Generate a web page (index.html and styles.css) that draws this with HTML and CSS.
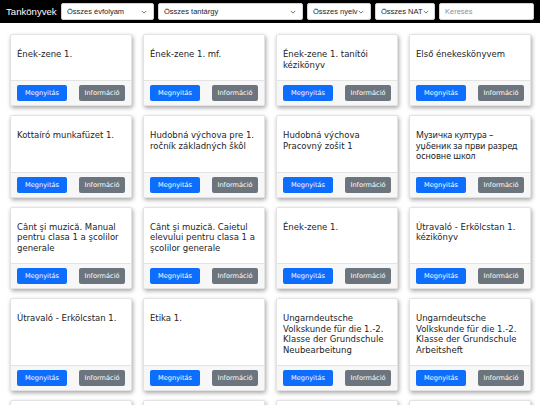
FILE: index.html
```html
<!DOCTYPE html>
<html lang="hu">
<head>
<meta charset="utf-8">
<title>Tankönyvek</title>
<link rel="stylesheet" href="styles.css">
</head>
<body>
<nav class="navbar">
  <span class="brand">Tankönyvek</span>
  <div class="filters">
    <div class="select w-evf"><span>Összes évfolyam</span><svg class="chev" viewBox="0 0 8 5"><path d="M1 1l3 3 3-3" fill="none" stroke="#444" stroke-width="1"/></svg></div>
    <div class="select w-tan"><span>Összes tantárgy</span><svg class="chev" viewBox="0 0 8 5"><path d="M1 1l3 3 3-3" fill="none" stroke="#444" stroke-width="1"/></svg></div>
    <div class="select w-nyelv"><span>Összes nyelv</span><svg class="chev" viewBox="0 0 8 5"><path d="M1 1l3 3 3-3" fill="none" stroke="#444" stroke-width="1"/></svg></div>
    <div class="select w-nat"><span>Összes NAT</span><svg class="chev" viewBox="0 0 8 5"><path d="M1 1l3 3 3-3" fill="none" stroke="#444" stroke-width="1"/></svg></div>
    <div class="search"><span>Keresés</span></div>
  </div>
</nav>
<main class="grid">
  <div class="card"><div class="card-body"><p class="title">Ének-zene 1.</p></div><div class="card-footer"><button class="btn btn-primary">Megnyitás</button><button class="btn btn-secondary">Információ</button></div></div>
  <div class="card"><div class="card-body"><p class="title">Ének-zene 1. mf.</p></div><div class="card-footer"><button class="btn btn-primary">Megnyitás</button><button class="btn btn-secondary">Információ</button></div></div>
  <div class="card"><div class="card-body"><p class="title">Ének-zene 1. tanítói kézikönyv</p></div><div class="card-footer"><button class="btn btn-primary">Megnyitás</button><button class="btn btn-secondary">Információ</button></div></div>
  <div class="card"><div class="card-body"><p class="title">Első énekeskönyvem</p></div><div class="card-footer"><button class="btn btn-primary">Megnyitás</button><button class="btn btn-secondary">Információ</button></div></div>

  <div class="card"><div class="card-body"><p class="title">Kottaíró munkafüzet 1.</p></div><div class="card-footer"><button class="btn btn-primary">Megnyitás</button><button class="btn btn-secondary">Információ</button></div></div>
  <div class="card"><div class="card-body"><p class="title">Hudobná výchova pre 1. ročník základných škôl</p></div><div class="card-footer"><button class="btn btn-primary">Megnyitás</button><button class="btn btn-secondary">Információ</button></div></div>
  <div class="card"><div class="card-body"><p class="title">Hudobná výchova Pracovný zošit 1</p></div><div class="card-footer"><button class="btn btn-primary">Megnyitás</button><button class="btn btn-secondary">Információ</button></div></div>
  <div class="card"><div class="card-body"><p class="title title-cyr" lang="sr">Музичка култура – уџбеник за први разред основне школ</p></div><div class="card-footer"><button class="btn btn-primary">Megnyitás</button><button class="btn btn-secondary">Információ</button></div></div>

  <div class="card"><div class="card-body"><p class="title">Cânt şi muzică. Manual pentru clasa 1 a şcolilor generale</p></div><div class="card-footer"><button class="btn btn-primary">Megnyitás</button><button class="btn btn-secondary">Információ</button></div></div>
  <div class="card"><div class="card-body"><p class="title">Cânt şi muzică. Caietul elevului pentru clasa 1 a şcolilor generale</p></div><div class="card-footer"><button class="btn btn-primary">Megnyitás</button><button class="btn btn-secondary">Információ</button></div></div>
  <div class="card"><div class="card-body"><p class="title">Ének-zene 1.</p></div><div class="card-footer"><button class="btn btn-primary">Megnyitás</button><button class="btn btn-secondary">Információ</button></div></div>
  <div class="card"><div class="card-body"><p class="title">Útravaló - Erkölcstan 1. kézikönyv</p></div><div class="card-footer"><button class="btn btn-primary">Megnyitás</button><button class="btn btn-secondary">Információ</button></div></div>

  <div class="card"><div class="card-body"><p class="title">Útravaló - Erkölcstan 1.</p></div><div class="card-footer"><button class="btn btn-primary">Megnyitás</button><button class="btn btn-secondary">Információ</button></div></div>
  <div class="card"><div class="card-body"><p class="title">Etika 1.</p></div><div class="card-footer"><button class="btn btn-primary">Megnyitás</button><button class="btn btn-secondary">Információ</button></div></div>
  <div class="card"><div class="card-body"><p class="title">Ungarndeutsche Volkskunde für die 1.-2. Klasse der Grundschule Neubearbeitung</p></div><div class="card-footer"><button class="btn btn-primary">Megnyitás</button><button class="btn btn-secondary">Információ</button></div></div>
  <div class="card"><div class="card-body"><p class="title">Ungarndeutsche Volkskunde für die 1.-2. Klasse der Grundschule Arbeitsheft</p></div><div class="card-footer"><button class="btn btn-primary">Megnyitás</button><button class="btn btn-secondary">Információ</button></div></div>

  <div class="card card-clip"></div>
  <div class="card card-clip"></div>
  <div class="card card-clip"></div>
  <div class="card card-clip"></div>
</main>
</body>
</html>
```

FILE: styles.css
```css
* { box-sizing: border-box; }
html, body { margin: 0; padding: 0; }
body {
  background: #ffffff;
  font-family: "DejaVu Sans", sans-serif;
  color: #212529;
}
.navbar {
  height: 23px;
  background: #000;
  display: flex;
  align-items: center;
  padding: 0 0 0 6px;
}
.brand {
  color: #fff;
  font-family: "Liberation Sans", Arial, sans-serif;
  font-size: 9.6px;
  width: 55px;
  flex: none;
  white-space: nowrap;
}
.filters {
  display: flex;
  gap: 4px;
  align-items: center;
  flex: none;
}
.select, .search {
  flex: none;
  height: 17px;
  background: #fff;
  border: 1px solid #ced4da;
  border-radius: 2px;
  display: flex;
  align-items: center;
  justify-content: space-between;
  padding: 0 6px 0 5px;
  font-family: "Liberation Sans", Arial, sans-serif;
  font-size: 7.5px;
  color: #212529;
  white-space: nowrap;
}
.chev { width: 6px; height: 4px; flex: none; }
.w-evf { width: 93px; }
.w-tan { width: 145px; }
.w-nyelv { width: 64px; }
.w-nat { width: 60px; }
.search { width: 95px; color: #8a9096; }
.grid {
  display: grid;
  grid-template-columns: repeat(4, 122px);
  column-gap: 11px;
  row-gap: 9px;
  padding: 11px 0 0 10px;
}
.card {
  display: flex;
  flex-direction: column;
  background: #fff;
  border: 1px solid #e3e3e3;
  border-radius: 2px;
  box-shadow: 1px 2px 4px rgba(0, 0, 0, 0.35);
}
.card-clip { height: 20px; }
.card-body {
  flex: 1;
  padding: 14px 6px 10px 6px;
}
.title {
  margin: 0;
  font-size: 8.5px;
  line-height: 10.5px;
  color: #212529;
}
.title-cyr {
  font-family: "Noto Sans", "DejaVu Sans", sans-serif;
  font-size: 8.7px;
}
.card-footer {
  display: flex;
  justify-content: space-between;
  padding: 4px 6px 4px 6px;
  background: #f7f7f7;
  border-top: 1px solid #e3e3e3;
}
.btn {
  height: 16px;
  border: none;
  border-radius: 2px;
  color: #fff;
  font-family: "DejaVu Sans", sans-serif;
  font-size: 6.6px;
  padding: 0 4px;
}
.btn-primary { background: #0d6efd; width: 50px; }
.btn-secondary { background: #6c757d; width: 46px; }
```
